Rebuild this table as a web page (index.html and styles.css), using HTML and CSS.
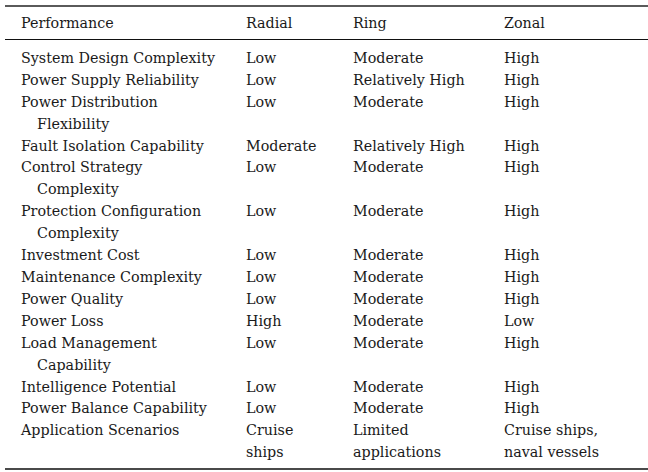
FILE: index.html
```html
<!DOCTYPE html>
<html lang="en">
<head>
<meta charset="utf-8">
<title>Performance comparison</title>
<link rel="stylesheet" href="styles.css">
</head>
<body>
<table class="cmp">
  <colgroup>
    <col class="c1"><col class="c2"><col class="c3"><col class="c4">
  </colgroup>
  <thead>
    <tr><th>Performance</th><th>Radial</th><th>Ring</th><th>Zonal</th></tr>
  </thead>
  <tbody>
    <tr class="first"><td>System Design Complexity</td><td>Low</td><td>Moderate</td><td>High</td></tr>
    <tr><td>Power Supply Reliability</td><td>Low</td><td>Relatively High</td><td>High</td></tr>
    <tr><td>Power Distribution<br>Flexibility</td><td>Low</td><td>Moderate</td><td>High</td></tr>
    <tr><td>Fault Isolation Capability</td><td>Moderate</td><td>Relatively High</td><td>High</td></tr>
    <tr><td>Control Strategy<br>Complexity</td><td>Low</td><td>Moderate</td><td>High</td></tr>
    <tr><td>Protection Configuration<br>Complexity</td><td>Low</td><td>Moderate</td><td>High</td></tr>
    <tr><td>Investment Cost</td><td>Low</td><td>Moderate</td><td>High</td></tr>
    <tr><td>Maintenance Complexity</td><td>Low</td><td>Moderate</td><td>High</td></tr>
    <tr><td>Power Quality</td><td>Low</td><td>Moderate</td><td>High</td></tr>
    <tr><td>Power Loss</td><td>High</td><td>Moderate</td><td>Low</td></tr>
    <tr><td>Load Management<br>Capability</td><td>Low</td><td>Moderate</td><td>High</td></tr>
    <tr><td>Intelligence Potential</td><td>Low</td><td>Moderate</td><td>High</td></tr>
    <tr><td>Power Balance Capability</td><td>Low</td><td>Moderate</td><td>High</td></tr>
    <tr class="last"><td>Application Scenarios</td><td>Cruise<br>ships</td><td>Limited<br>applications</td><td>Cruise ships,<br>naval vessels</td></tr>
  </tbody>
</table>
</body>
</html>
```
FILE: styles.css
```css
html, body {
  margin: 0;
  padding: 0;
  background: #ffffff;
}
body {
  overflow: hidden;
}
.cmp {
  margin: 5px 0 0 5px;
  width: 645px;
  table-layout: fixed;
  border-collapse: collapse;
  font-family: "DejaVu Serif", "Liberation Serif", serif;
  font-size: 14.3px;
  line-height: 21.9px;
  color: #1a1a1a;
  border-top: 2px solid #5a5a5a;
  border-bottom: 2px solid #4a4a4a;
}
.c1 { width: 225px; }
.c2 { width: 107px; }
.c3 { width: 151px; }
.c4 { width: 162px; }
.cmp th {
  font-weight: normal;
  text-align: left;
  padding: 6px 0 4px 16px;
  border-bottom: 1px solid #111111;
  white-space: nowrap;
}
.cmp td {
  padding: 0 0 0 16px;
  vertical-align: top;
  white-space: nowrap;
}
.cmp td:first-child {
  padding-left: 32px;
  text-indent: -16px;
}
.cmp tr.first td {
  padding-top: 8px;
}
.cmp tr.last td {
  padding-bottom: 4px;
}
```
